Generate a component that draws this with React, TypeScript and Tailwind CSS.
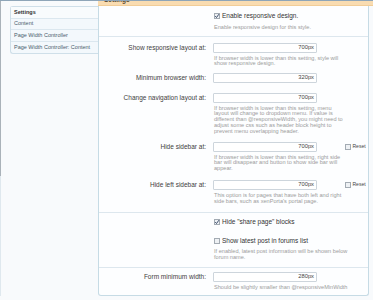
import React from "react";

const Check = ({ checked }: { checked?: boolean }) => (
  <span className="relative inline-block w-[6px] h-[6px] border border-[#a3abb3] bg-[#eef1f4] shrink-0 box-border">
    {checked && (
      <svg viewBox="0 0 6 6" className="absolute left-[-1px] top-[-1px] w-[6px] h-[6px]">
        <path d="M1.2 3.1 L2.5 4.5 L4.9 1.2" stroke="#2a3d5e" strokeWidth="0.9" fill="none" />
      </svg>
    )}
  </span>
);

const Input = ({ value }: { value: string }) => (
  <div className="w-[104px] h-[10px] border border-[#cdd5dc] bg-white rounded-[1px] flex items-center justify-end pr-[2px] text-[5.8px] leading-none text-[#444]">
    {value}
  </div>
);

const Hint = ({ lines, className = "" }: { lines: string[]; className?: string }) => (
  <div className={"text-[5.6px] leading-[5.7px] text-[#9c9c9c] " + className}>
    {lines.map((l, i) => (
      <div key={i} className="whitespace-nowrap">{l}</div>
    ))}
  </div>
);

const Field = ({
  label,
  value,
  hint,
  reset,
  className = "",
}: {
  label: string;
  value: string;
  hint?: string[];
  reset?: boolean;
  className?: string;
}) => (
  <div className={"flex items-start " + className}>
    <div className="w-[107px] h-[10px] flex items-center justify-end text-[6.5px] text-[#3d3d3d] whitespace-nowrap">
      {label}
    </div>
    <div className="ml-[7px]">
      <div className="flex items-center">
        <Input value={value} />
        {reset && (
          <div className="flex items-center ml-[28px] gap-[1.5px]">
            <Check />
            <span className="text-[5px] text-[#444] leading-none">Reset</span>
          </div>
        )}
      </div>
      {hint && <Hint lines={hint} className="mt-[3px] pl-[1px]" />}
    </div>
  </div>
);

const CheckRow = ({ label, checked, className = "" }: { label: string; checked?: boolean; className?: string }) => (
  <div className={"flex items-center h-[8px] ml-[115px] gap-[2px] " + className}>
    <Check checked={checked} />
    <span className="text-[6.5px] text-[#333] whitespace-nowrap leading-none">{label}</span>
  </div>
);

export default function App() {
  return (
    <div
      className="w-[373px] h-[300px] overflow-hidden bg-[#f8fafc] relative"
      style={{ fontFamily: '"Liberation Sans", Arial, sans-serif' }}
    >
      <div className="h-px bg-[#8ea5b8]" />
      <div className="flex">
        {/* left column */}
        <div className="w-[98px] flex shrink-0">
          <div className="w-px flex flex-col">
            <div className="h-[175px] bg-[#aab2b9]" />
            <div className="flex-1 bg-[#dfe8ee]" />
          </div>
          <div className="flex-1 pl-[9px] pt-[5px]">
            <div className="border border-r-0 border-[#cfdfe9] rounded-tl-[3px] rounded-bl-[3px] bg-[#f3f8fc] text-[5.5px] leading-none">
              <div className="h-[11.5px] flex items-center pl-[3px] font-bold text-[#333] bg-[#f8fbfd] border-b border-[#dbe7ef]">
                Settings
              </div>
              <div className="h-[11.5px] flex items-center pl-[3px] text-[#4a5d6c] border-b border-[#dbe7ef]">
                Content
              </div>
              <div className="h-[11.5px] flex items-center pl-[3px] text-[#4a5d6c] border-b border-[#dbe7ef]">
                Page Width Controller
              </div>
              <div className="h-[11.5px] flex items-center pl-[3px] text-[#4a5d6c]">
                Page Width Controller: Content
              </div>
            </div>
          </div>
        </div>

        {/* right column */}
        <div className="flex-1">
          <div className="h-[5px] bg-[#f9dcb1] border-b border-[#f1cd98] overflow-hidden">
            <div className="pl-[6px] text-[6.5px] font-bold text-[#5a4a30] leading-none -mt-[4px]">Settings</div>
          </div>
          <div className="mr-[4px] border-l border-r border-b border-[#c6dbe5] rounded-b-[3px] bg-[#fdfeff]">
            {/* section 1 */}
            <div className="pt-[6px] pb-[5px] border-b border-[#dde7ee]">
              <CheckRow label="Enable responsive design." checked />
              <Hint className="ml-[115px] mt-[5px]" lines={["Enable responsive design for this style."]} />
            </div>
            {/* section 2 */}
            <div className="pb-[7.6px] border-b border-[#dde7ee]">
              <Field
                className="mt-[6px]"
                label="Show responsive layout at:"
                value="700px"
                hint={["If browser width is lower than this setting, style will", "show responsive design."]}
              />
              <Field className="mt-[5.6px]" label="Minimum browser width:" value="320px" />
              <Field
                className="mt-[10px]"
                label="Change navigation layout at:"
                value="700px"
                hint={[
                  "If browser width is lower than this setting, menu",
                  "layout will change to dropdown menu. If value is",
                  "different than @responsiveWidth, you might need to",
                  "adjust some css such as header block height to",
                  "prevent menu overlapping header.",
                ]}
              />
              <Field
                className="mt-[7.5px]"
                label="Hide sidebar at:"
                value="700px"
                reset
                hint={[
                  "If browser width is lower than this setting, right side",
                  "bar will disappear and button to show side bar will",
                  "appear.",
                ]}
              />
              <Field
                className="mt-[8px]"
                label="Hide left sidebar at:"
                value="700px"
                reset
                hint={[
                  "This option is for pages that have both left and right",
                  "side bars, such as xenPorta's portal page.",
                ]}
              />
            </div>
            {/* section 3 */}
            <div className="pb-[6.4px] border-b border-[#dde7ee]">
              <CheckRow className="mt-[5.5px]" label={'Hide "share page" blocks'} checked />
              <CheckRow className="mt-[11px]" label="Show latest post in forums list" />
              <Hint
                className="ml-[115px] mt-[3.7px]"
                lines={["If enabled, latest post information will be shown below", "forum name."]}
              />
            </div>
            {/* section 4 */}
            <div className="pb-[4.3px]">
              <Field
                className="mt-[4px]"
                label="Form minimum width:"
                value="280px"
                hint={["Should be slightly smaller than @responsiveMinWidth"]}
              />
            </div>
          </div>
        </div>
      </div>
    </div>
  );
}
